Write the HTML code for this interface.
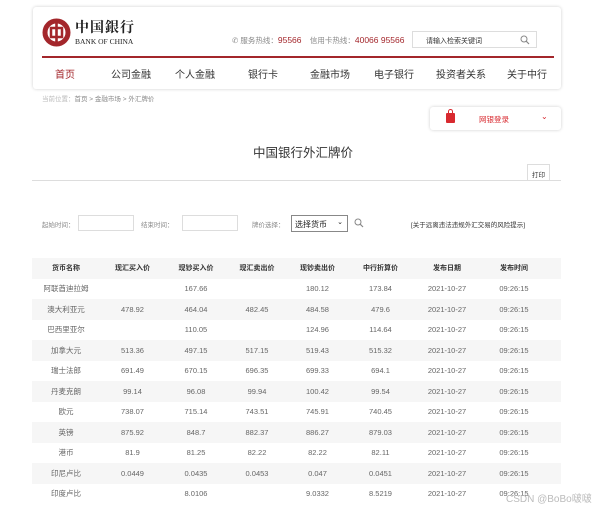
<!DOCTYPE html>
<html><head><meta charset="utf-8"><style>
*{margin:0;padding:0;box-sizing:border-box}
body{width:600px;height:507px;overflow:hidden;background:#fff;font-family:"Liberation Sans","Noto Sans CJK SC",sans-serif;color:#333;position:relative}
.a{position:absolute;white-space:nowrap}
.hdr{position:absolute;left:33px;top:7px;width:528px;height:82px;border-radius:3px;box-shadow:0 0 3px rgba(0,0,0,.2);background:#fff}
.nav span{position:absolute;top:66px;font-size:10px;color:#333;transform:translateX(-50%)}
table{position:absolute;left:32px;top:258px;width:529px;border-collapse:collapse;font-size:7.5px;color:#666;table-layout:fixed}
td,th{height:20.5px;text-align:center;padding:0}
th{font-weight:bold;color:#333;font-size:7px}
tr:nth-child(odd){background:#f6f6f6}
td:last-child,th:last-child{padding-right:14px}
</style></head><body>
<div class="hdr"></div>
<svg class="a" style="left:42px;top:18px" width="29" height="29" viewBox="0 0 29 29"><circle cx="14.5" cy="14.5" r="11.5" fill="none" stroke="#a3262b" stroke-width="5"/><rect x="9" y="10" width="11" height="9" fill="none" stroke="#a3262b" stroke-width="2.5"/><rect x="13.2" y="2" width="2.6" height="25" fill="#a3262b"/></svg>
<div class="a" style="left:75px;top:17px;font-size:14px;font-family:'Noto Serif CJK SC',serif;font-weight:bold;color:#222;letter-spacing:1px">中国銀行</div>
<div class="a" style="left:75px;top:37px;font-size:7.5px;font-family:'Liberation Serif',serif;color:#222">BANK OF CHINA</div>
<div class="a" style="left:232px;top:35px;font-size:7.5px;color:#888">&#9990; 服务热线：<span style="color:#a3262b;font-size:8.5px">95566</span> &nbsp;&nbsp;&nbsp;信用卡热线：<span style="color:#a3262b;font-size:8.5px">40066 95566</span></div>
<div class="a" style="left:412px;top:31px;width:125px;height:17px;border:1px solid #ddd;font-size:7px;color:#333;padding:4px 0 0 13px">请输入检索关键词<svg style="position:absolute;right:6px;top:3px" width="10" height="10" viewBox="0 0 10 10"><circle cx="4" cy="4" r="3" fill="none" stroke="#888" stroke-width="1"/><path d="M6.2 6.2L9 9" stroke="#888" stroke-width="1.2"/></svg></div>
<div class="a" style="left:42px;top:56px;width:512px;height:2px;background:#a3262b"></div>
<div class="nav"><span style="left:65px;color:#a3262b">首页</span><span style="left:131px">公司金融</span><span style="left:195px">个人金融</span><span style="left:263px">银行卡</span><span style="left:330px">金融市场</span><span style="left:394px">电子银行</span><span style="left:461px">投资者关系</span><span style="left:527px">关于中行</span></div>
<div class="a" style="left:42px;top:93px;font-size:6.5px;color:#888"><span style="color:#bbb">当前位置：</span>首页 &gt; 金融市场 &gt; 外汇牌价</div>
<div class="a" style="left:430px;top:107px;width:131px;height:23px;border-radius:3px;box-shadow:0 0 3px rgba(0,0,0,.2)"></div>
<div class="a" style="left:446px;top:113px;width:9px;height:10px;background:#d8292f;border-radius:1px"></div>
<div class="a" style="left:448px;top:109px;width:5px;height:6px;border:1.5px solid #d8292f;border-bottom:0;border-radius:3px 3px 0 0"></div>
<div class="a" style="left:479px;top:114px;font-size:7.5px;color:#d8292f">网银登录</div>
<div class="a" style="left:541px;top:112px;font-size:8px;color:#d8292f">&#8964;</div>
<div class="a" style="left:253px;top:142px;font-size:12.5px;color:#333">中国银行外汇牌价</div>
<div class="a" style="left:527px;top:164px;width:23px;height:16px;border:1px solid #ddd;border-bottom:0;font-size:6.5px;text-align:center;padding-top:4px">打印</div>
<div class="a" style="left:32px;top:180px;width:529px;height:1px;background:#ddd"></div>
<div class="a" style="left:42px;top:219px;font-size:6.5px;color:#888">起始时间：</div>
<div class="a" style="left:78px;top:215px;width:56px;height:16px;border:1px solid #ddd"></div>
<div class="a" style="left:141px;top:219px;font-size:6.5px;color:#888">结束时间：</div>
<div class="a" style="left:182px;top:215px;width:56px;height:16px;border:1px solid #ddd"></div>
<div class="a" style="left:252px;top:219px;font-size:6.5px;color:#888">牌价选择：</div>
<div class="a" style="left:291px;top:215px;width:57px;height:17px;border:1px solid #888;font-size:8px;color:#222;padding:3px 0 0 3px">选择货币<span style="position:absolute;right:4px;top:2px;font-size:7px">&#8964;</span></div>
<svg class="a" style="left:354px;top:218px" width="10" height="10" viewBox="0 0 10 10"><circle cx="4" cy="4" r="3" fill="none" stroke="#888" stroke-width="1"/><path d="M6.2 6.2L9 9" stroke="#888" stroke-width="1.2"/></svg>
<div class="a" style="left:411px;top:219px;font-size:6.5px;color:#333">[关于远离违法违规外汇交易的风险提示]</div>
<table>
<colgroup><col style="width:68px"><col style="width:65px"><col style="width:62px"><col style="width:60px"><col style="width:61px"><col style="width:65px"><col style="width:68px"><col style="width:80px"></colgroup>
<tr><th>货币名称</th><th>现汇买入价</th><th>现钞买入价</th><th>现汇卖出价</th><th>现钞卖出价</th><th>中行折算价</th><th>发布日期</th><th>发布时间</th></tr>
<tr><td>阿联酋迪拉姆</td><td></td><td>167.66</td><td></td><td>180.12</td><td>173.84</td><td>2021-10-27</td><td>09:26:15</td></tr>
<tr><td>澳大利亚元</td><td>478.92</td><td>464.04</td><td>482.45</td><td>484.58</td><td>479.6</td><td>2021-10-27</td><td>09:26:15</td></tr>
<tr><td>巴西里亚尔</td><td></td><td>110.05</td><td></td><td>124.96</td><td>114.64</td><td>2021-10-27</td><td>09:26:15</td></tr>
<tr><td>加拿大元</td><td>513.36</td><td>497.15</td><td>517.15</td><td>519.43</td><td>515.32</td><td>2021-10-27</td><td>09:26:15</td></tr>
<tr><td>瑞士法郎</td><td>691.49</td><td>670.15</td><td>696.35</td><td>699.33</td><td>694.1</td><td>2021-10-27</td><td>09:26:15</td></tr>
<tr><td>丹麦克朗</td><td>99.14</td><td>96.08</td><td>99.94</td><td>100.42</td><td>99.54</td><td>2021-10-27</td><td>09:26:15</td></tr>
<tr><td>欧元</td><td>738.07</td><td>715.14</td><td>743.51</td><td>745.91</td><td>740.45</td><td>2021-10-27</td><td>09:26:15</td></tr>
<tr><td>英镑</td><td>875.92</td><td>848.7</td><td>882.37</td><td>886.27</td><td>879.03</td><td>2021-10-27</td><td>09:26:15</td></tr>
<tr><td>港币</td><td>81.9</td><td>81.25</td><td>82.22</td><td>82.22</td><td>82.11</td><td>2021-10-27</td><td>09:26:15</td></tr>
<tr><td>印尼卢比</td><td>0.0449</td><td>0.0435</td><td>0.0453</td><td>0.047</td><td>0.0451</td><td>2021-10-27</td><td>09:26:15</td></tr>
<tr><td>印度卢比</td><td></td><td>8.0106</td><td></td><td>9.0332</td><td>8.5219</td><td>2021-10-27</td><td>09:26:15</td></tr>
</table>
<div class="a" style="left:506px;top:490px;font-size:10px;color:#bbb">CSDN @BoBo啵啵</div>
</body></html>
